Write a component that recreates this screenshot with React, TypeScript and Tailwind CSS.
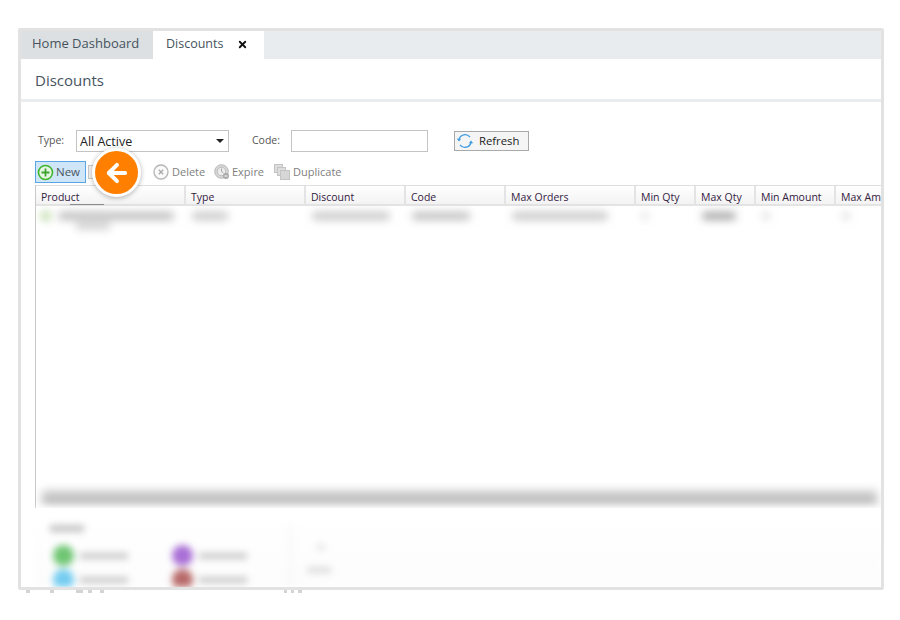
import { ArrowLeft, X } from "lucide-react";

const font = "font-['Open_Sans','Noto_Sans',sans-serif]";

const columns = [
  { name: "Product", width: "w-[150px]" },
  { name: "Type", width: "w-[120px]" },
  { name: "Discount", width: "w-[100px]" },
  { name: "Code", width: "w-[100px]" },
  { name: "Max Orders", width: "w-[130px]" },
  { name: "Min Qty", width: "w-[60px]" },
  { name: "Max Qty", width: "w-[60px]" },
  { name: "Min Amount", width: "w-[80px]" },
  { name: "Max Amount", width: "w-[80px]" },
];

// blurred values in the first row: width, darkness
const cells = [
  { width: "w-[116px]", tone: "bg-[#bdbdbd]", cell: "w-[150px] pl-[22px]" },
  { width: "w-[36px]", tone: "bg-[#c8c8c8]", cell: "w-[120px] pl-[6px]" },
  { width: "w-[78px]", tone: "bg-[#c8c8c8]", cell: "w-[100px] pl-[6px]" },
  { width: "w-[58px]", tone: "bg-[#c0c0c0]", cell: "w-[100px] pl-[6px]" },
  { width: "w-[96px]", tone: "bg-[#c8c8c8]", cell: "w-[130px] pl-[6px]" },
  { width: "w-[6px]", tone: "bg-[#dddddd]", cell: "w-[60px] pl-[6px]" },
  { width: "w-[34px]", tone: "bg-[#a8a8a8]", cell: "w-[60px] pl-[6px]" },
  { width: "w-[8px]", tone: "bg-[#dddddd]", cell: "w-[80px] pl-[6px]" },
  { width: "w-[8px]", tone: "bg-[#dddddd]", cell: "w-[80px] pl-[6px]" },
];

const legend = ["bg-[#6fc673]", "bg-[#a96fd6]", "bg-[#74cdf0]", "bg-[#b86a6a]"];

const PlusIcon = () => (
  <svg width="17" height="17" viewBox="0 0 17 17" fill="none">
    <circle cx="8.5" cy="8.5" r="7" stroke="#3fb62c" strokeWidth="1.6" fill="#e6f6e4" />
    <path d="M8.5 4.5v8M4.5 8.5h8" stroke="#3fa52f" strokeWidth="1.8" />
  </svg>
);

const DeleteIcon = () => (
  <svg width="16" height="16" viewBox="0 0 16 16" fill="none">
    <circle cx="8" cy="8" r="7" stroke="#b5b5b5" strokeWidth="1.3" fill="#fafafa" />
    <path d="M5.8 5.8l4.4 4.4M10.2 5.8l-4.4 4.4" stroke="#a8a8a8" strokeWidth="1.3" />
  </svg>
);

const ExpireIcon = () => (
  <svg width="16" height="16" viewBox="0 0 16 16" fill="none">
    <circle cx="7.5" cy="7.5" r="6.8" fill="#d6d6d6" stroke="#b8b8b8" />
    <circle cx="7.5" cy="7.5" r="4.2" fill="#ececec" stroke="#bdbdbd" />
    <path d="M7.5 4.5v3l2 1.5" stroke="#a5a5a5" />
    <circle cx="12" cy="12" r="3" fill="#a9a9a9" />
    <path d="M10.5 12h3" stroke="#ffffff" />
  </svg>
);

const DuplicateIcon = () => (
  <svg width="16" height="16" viewBox="0 0 16 16" fill="none">
    <rect x="0.5" y="0.5" width="8" height="8" fill="#dddddd" stroke="#c4c4c4" />
    <rect x="3.5" y="3.5" width="8" height="8" fill="#dddddd" stroke="#c4c4c4" />
    <rect x="6.5" y="6.5" width="9" height="9" fill="#d6d6d6" stroke="#c4c4c4" />
  </svg>
);

const RefreshIcon = () => (
  <svg width="18" height="18" viewBox="0 0 18 18" fill="none">
    <path d="M3 7.5A6.2 6.2 0 0 1 14 5.2" stroke="#3f9be0" strokeWidth="1.3" />
    <path d="M15 10.5A6.2 6.2 0 0 1 4 12.8" stroke="#3f9be0" strokeWidth="1.3" />
    <path d="M0.8 6.8h4.4L3 9.6zM12.8 11.2h4.4L15 8.4z" fill="#3f9be0" />
  </svg>
);

export default function App() {
  return (
    <div className={`${font} relative w-[900px] h-[620px] bg-white pl-[18px] pt-[28px] overflow-hidden`}>
      <div className="w-[866px] h-[562px] border-[3px] border-[#e2e2e2] rounded-[2px] flex flex-col overflow-hidden">
        {/* tabs */}
        <div className="h-[28px] flex bg-[#e9ecee] shrink-0">
          <div className="w-[132px] bg-[#dce0e2] pl-[11px] text-[13px] leading-[24px] text-[#46535e]">
            Home Dashboard
          </div>
          <div className="w-[111px] bg-white pl-[13px] flex items-start text-[12.5px] leading-[26px] text-[#46535e]">
            <span>Discounts</span>
            <X className="ml-[14px] mt-[8px] w-[11px] h-[11px] text-[#111111]" strokeWidth={4} />
          </div>
        </div>

        {/* page title */}
        <div className="h-[43px] shrink-0 border-b-[3px] border-[#e9edf0] pl-[14px] pt-[9px] text-[15px] leading-[24px] text-[#46535e]">
          Discounts
        </div>

        <div className="flex-1 pl-[14px] pt-[28px] min-h-0 flex flex-col">
          {/* filters */}
          <div className="flex items-center h-[22px] text-[11px]">
            <span className="ml-[3px] w-[38px] text-[#555555] text-[10.5px]">Type:</span>
            <div className="w-[153px] h-[22px] border border-[#c4c4c4] flex items-center justify-between pl-[3px] pr-[3px] pt-[2px] text-[12.5px] text-[#222222]">
              <span>All Active</span>
              <span className="w-0 h-0 mr-[1px] mb-[2px] border-x-[4px] border-x-transparent border-t-[4px] border-t-[#222222]" />
            </div>
            <span className="ml-[23px] w-[39px] text-[#555555] text-[10.5px]">Code:</span>
            <div className="w-[137px] h-[22px] border border-[#c4c4c4]" />
            <div className="ml-[26px] w-[75px] h-[20px] border border-[#a9a9a9] bg-[#f5f5f5] flex items-center pl-[1px] gap-[5px] text-[11.3px] text-[#222222]">
              <RefreshIcon />
              <span>Refresh</span>
            </div>
          </div>

          {/* toolbar */}
          <div className="flex items-center h-[22px] mt-[9px] text-[11px] text-[#808080]">
            <div className="w-[51px] h-[22px] border border-[#5aa5e6] bg-[#cfe5f8] flex items-center pl-[1px] gap-[1px] text-[11.5px] text-[#4a5660]">
              <PlusIcon />
              <span className="ml-[1px]">New</span>
            </div>
            <div className="ml-[2px] w-[13px] h-[14px] border border-[#c8c8c8] bg-[#f4f4f4]" />
            <span className="ml-[2px] w-[49px]">Modify</span>
            <span className="ml-[1px]"><DeleteIcon /></span>
            <span className="ml-[3px] w-[42px]">Delete</span>
            <ExpireIcon />
            <span className="ml-[2px] w-[42px]">Expire</span>
            <DuplicateIcon />
            <span className="ml-[3px]">Duplicate</span>
          </div>

          {/* grid */}
          <div className="mt-[2px] h-[323px] shrink-0 border-l border-l-[#c9c9c9] flex flex-col overflow-hidden">
            <div className="h-[21px] shrink-0 flex border-t border-t-[#dedede] border-b-2 border-b-[#e4e4e4]">
              {columns.map((c) => (
                <div
                  key={c.name}
                  className={`${c.width} shrink-0 bg-gradient-to-b from-white to-[#f3f3f3] border-r-2 border-r-[#e4e4e4] pl-[5px] text-[10.5px] leading-[22px] text-[#33203f] whitespace-nowrap`}
                >
                  {c.name}
                </div>
              ))}
            </div>
            <div className="relative flex-1 min-h-0">
              <div className="absolute left-[34px] -top-[2px] w-[34px] h-[1px] bg-[#8a8a8a]" />
              <div className="flex pt-[6px] blur-[4px]">
                {cells.map((c, i) => (
                  <div key={i} className={`${c.cell} shrink-0`}>
                    <div className={`${c.width} ${c.tone} h-[8px] rounded-sm`} />
                    {i === 0 && <div className="ml-[18px] mt-[3px] w-[34px] h-[6px] bg-[#c8c8c8]" />}
                  </div>
                ))}
              </div>
              <div className="absolute left-[3px] top-[3px] w-[14px] h-[14px] rounded-full bg-[#dcebd0] blur-[3px]" />
              {/* scrollbar */}
              <div className="absolute left-[6px] right-[4px] bottom-[2px] h-[15px] bg-[#c2c2c2] blur-[5px]" />
            </div>
          </div>

          {/* bottom legend */}
          <div className="blur-[3.5px] pl-[15px] pt-[17px] flex-1 min-h-0 overflow-hidden flex bg-gradient-to-b from-white to-[#fcfcfc]">
            <div className="w-[241px] border-r-2 border-r-[#f2f2f2] h-[70px]">
              <div className="w-[34px] h-[7px] bg-[#c4c4c4] mb-[13px]" />
              <div className="grid grid-cols-[119px_119px] gap-y-[3px] pl-[3px]">
                {legend.map((tone) => (
                  <div key={tone} className="flex items-center gap-[6px]">
                    <div className={`${tone} w-[21px] h-[21px] rounded-full`} />
                    <div className="w-[48px] h-[6px] bg-[#c8c8c8]" />
                  </div>
                ))}
              </div>
            </div>
            <div className="ml-[16px] mt-[19px] w-[24px]">
              <div className="ml-[10px] w-[8px] h-[6px] bg-[#e4e4e4]" />
              <div className="mt-[17px] w-[24px] h-[6px] bg-[#dcdcdc]" />
            </div>
          </div>
        </div>
      </div>

      {/* specks under the frame edge */}
      <div className="flex items-start h-[4px] ml-[8px] blur-[0.5px]">
        {[
          "ml-0 w-[4px]",
          "ml-[20px] w-[4px]",
          "ml-[22px] w-[7px]",
          "ml-[5px] w-[4px]",
          "ml-[8px] w-[4px]",
          "ml-[180px] w-[3px]",
          "ml-[4px] w-[3px]",
          "ml-[4px] w-[4px]",
        ].map((c, i) => (
          <div key={i} className={`${c} h-[3px] bg-[#d4d4d4]`} />
        ))}
      </div>

      {/* orange callout */}
      <div className="absolute left-[92px] top-[148px] w-[49px] h-[49px] rounded-full bg-[#ff7f00] border-[3px] border-white shadow-[0_1px_5px_rgba(0,0,0,0.3)] flex items-center justify-center">
        <ArrowLeft className="w-[28px] h-[28px] text-white" strokeWidth={3.4} />
      </div>
    </div>
  );
}
